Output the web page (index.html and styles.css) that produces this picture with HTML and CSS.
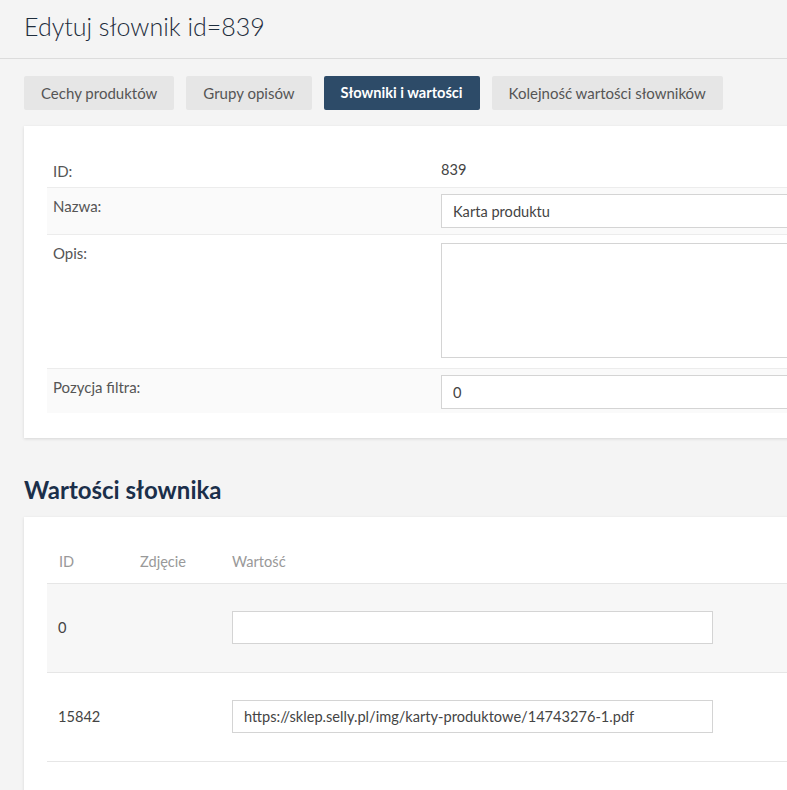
FILE: index.html
```html
<!DOCTYPE html>
<html lang="pl">
<head>
    <meta charset="UTF-8">
    <title>Edytuj słownik id=839</title>
    <link rel="stylesheet" href="styles.css">
</head>
<body>

<div class="page-head">
    <h1>Edytuj słownik id=839</h1>
</div>

<div class="page">
    <div class="tabs">
        <a class="tab">Cechy produktów</a>
        <a class="tab">Grupy opisów</a>
        <a class="tab active">Słowniki i wartości</a>
        <a class="tab">Kolejność wartości słowników</a>
    </div>

    <div class="card">
        <table class="form-table">
            <tr>
                <td class="label">ID:</td>
                <td class="value plain">839</td>
            </tr>
            <tr class="odd">
                <td class="label">Nazwa:</td>
                <td class="value"><input type="text" class="field" value="Karta produktu"></td>
            </tr>
            <tr>
                <td class="label">Opis:</td>
                <td class="value tall"><textarea class="field area"></textarea></td>
            </tr>
            <tr class="odd last">
                <td class="label">Pozycja filtra:</td>
                <td class="value"><input type="text" class="field" value="0"></td>
            </tr>
        </table>
    </div>

    <h2>Wartości słownika</h2>

    <div class="card card-values">
        <table class="values">
            <thead>
            <tr>
                <th class="col-id">ID</th>
                <th class="col-img">Zdjęcie</th>
                <th>Wartość</th>
            </tr>
            </thead>
            <tbody>
            <tr class="odd">
                <td class="col-id">0</td>
                <td class="col-img"></td>
                <td><input type="text" class="field short" value=""></td>
            </tr>
            <tr>
                <td class="col-id">15842</td>
                <td class="col-img"></td>
                <td><input type="text" class="field short" value="https://sklep.selly.pl/img/karty-produktowe/14743276-1.pdf"></td>
            </tr>
            </tbody>
        </table>
    </div>
</div>

</body>
</html>
```

FILE: styles.css
```css
* {
    margin: 0;
    padding: 0;
    box-sizing: border-box;
}

html, body {
    overflow: hidden;
}

body {
    background: #f4f4f4;
    font-family: Lato, "Liberation Sans", sans-serif;
    font-size: 14.6px;
    color: #444;
    width: 1100px;
}

.page-head {
    height: 59px;
    border-bottom: 1px solid #dcdcdc;
    padding: 10px 24px 0;
}

.page-head h1 {
    font-weight: 300;
    font-size: 25px;
    color: #1e2d3d;
    line-height: 32px;
}

.page {
    padding: 17px 0 0 24px;
}

.tabs {
    display: flex;
    gap: 12px;
    margin-bottom: 16px;
}

.tab {
    display: block;
    height: 34px;
    line-height: 34px;
    padding: 0 17px;
    background: #e6e6e6;
    color: #555;
    font-size: 15px;
    border-radius: 2px;
}

.tab.active {
    background: #2d4b68;
    color: #fff;
    font-weight: 700;
    font-size: 14.6px;
}

.card {
    background: #fff;
    box-shadow: 0 1px 3px rgba(0, 0, 0, 0.12);
    padding: 27px 23px 25px;
}

table {
    width: 100%;
    border-collapse: collapse;
}

.form-table td {
    border-bottom: 1px solid #ececec;
    vertical-align: top;
}

.form-table tr:last-child td {
    border-bottom: 0;
}

.form-table .odd td {
    background: #fafafa;
}

.form-table .label {
    width: 394px;
    padding: 9px 6px 0;
    color: #555;
    font-size: 15px;
}

.form-table .value {
    padding: 6px 0;
}

.form-table .value.tall {
    padding: 8px 0 10px;
}

.form-table .last .value {
    padding: 6px 0 4px;
}

.form-table .value.plain {
    padding: 8px 0 9px;
    color: #444;
}

.field {
    display: block;
    width: 100%;
    height: 34px;
    border: 1px solid #d4d4d4;
    background: #fff;
    padding: 0 11px;
    font-family: inherit;
    font-size: 14.6px;
    color: #444;
    outline: none;
}

.field.area {
    height: 115px;
    resize: none;
}

.field.short {
    width: 481px;
    height: 33px;
}

h2 {
    margin: 38px 0 13px;
    font-size: 24px;
    font-weight: 700;
    color: #1b2f4a;
    line-height: 28px;
}

.card-values {
    padding: 22px 0 30px 23px;
}

.values th {
    text-align: left;
    font-weight: 400;
    color: #999;
    height: 44px;
    padding-top: 2px;
    border-bottom: 1px solid #e6e6e6;
}

.values td {
    height: 89px;
    border-bottom: 1px solid #e6e6e6;
    color: #444;
}

.values .odd td {
    background: #f7f7f7;
}

.values .col-id {
    width: 93px;
    padding-left: 12px;
}

.values td.col-id {
    padding-left: 11px;
}

.values .col-img {
    width: 92px;
}
```
